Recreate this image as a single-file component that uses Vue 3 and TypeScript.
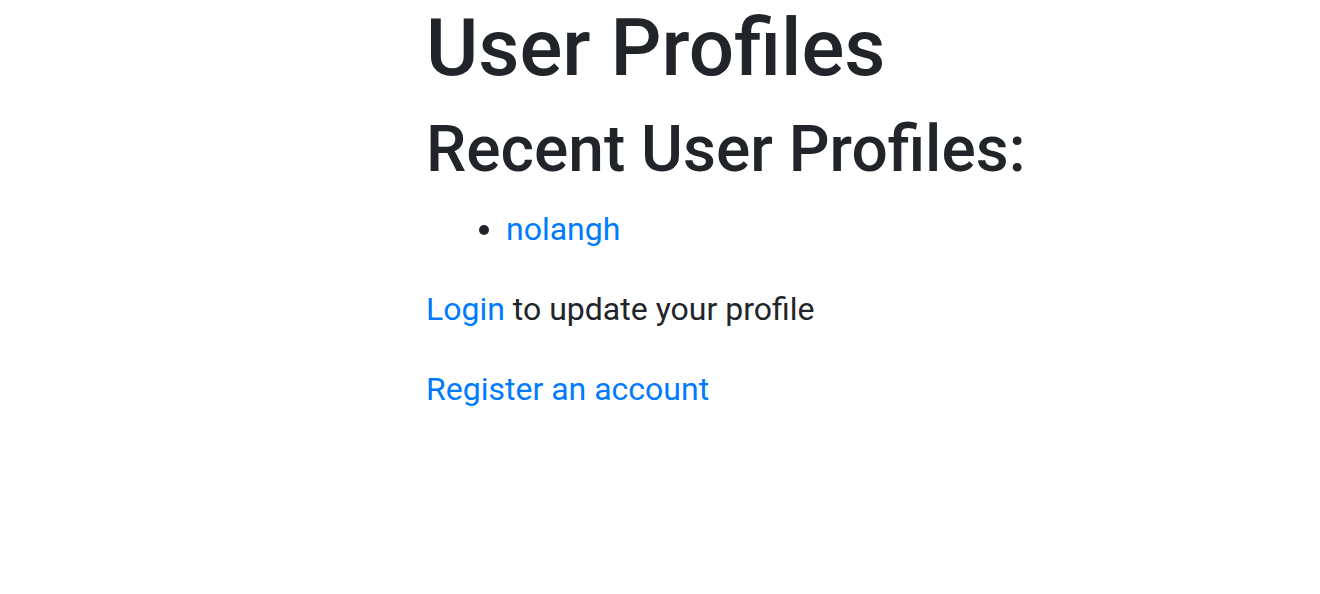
<script setup lang="ts">
interface Profile {
  username: string
}

const profiles: Profile[] = [{ username: 'nolangh' }]
</script>

<template>
  <main class="page">
    <h1 class="title">User Profiles</h1>
    <h2 class="subtitle">Recent User Profiles:</h2>
    <ul class="profiles">
      <li v-for="profile in profiles" :key="profile.username">
        <a class="link" :href="`#${profile.username}`">{{ profile.username }}</a>
      </li>
    </ul>
    <p class="text"><a class="link" href="#login">Login</a> to update your profile</p>
    <p class="text"><a class="link" href="#register">Register an account</a></p>
  </main>
</template>

<style>
body {
  background: #fff;
}
</style>

<style scoped>
.page {
  padding-left: 426px;
  color: #212529;
  font-family: Roboto, "Liberation Sans", sans-serif;
  font-size: 32px;
  line-height: 48px;
}

.title,
.subtitle {
  margin: 0 0 16px;
  font-weight: 500;
  line-height: 1.2;
}

.title {
  font-size: 80px;
}

.subtitle {
  font-size: 64px;
}

.profiles {
  margin: 0 0 32px;
  padding-left: 80px;
}

.text {
  margin: 0 0 32px;
}

.link {
  color: #007bff;
  text-decoration: none;
}

.link:hover {
  color: #0056b3;
  text-decoration: underline;
}
</style>
